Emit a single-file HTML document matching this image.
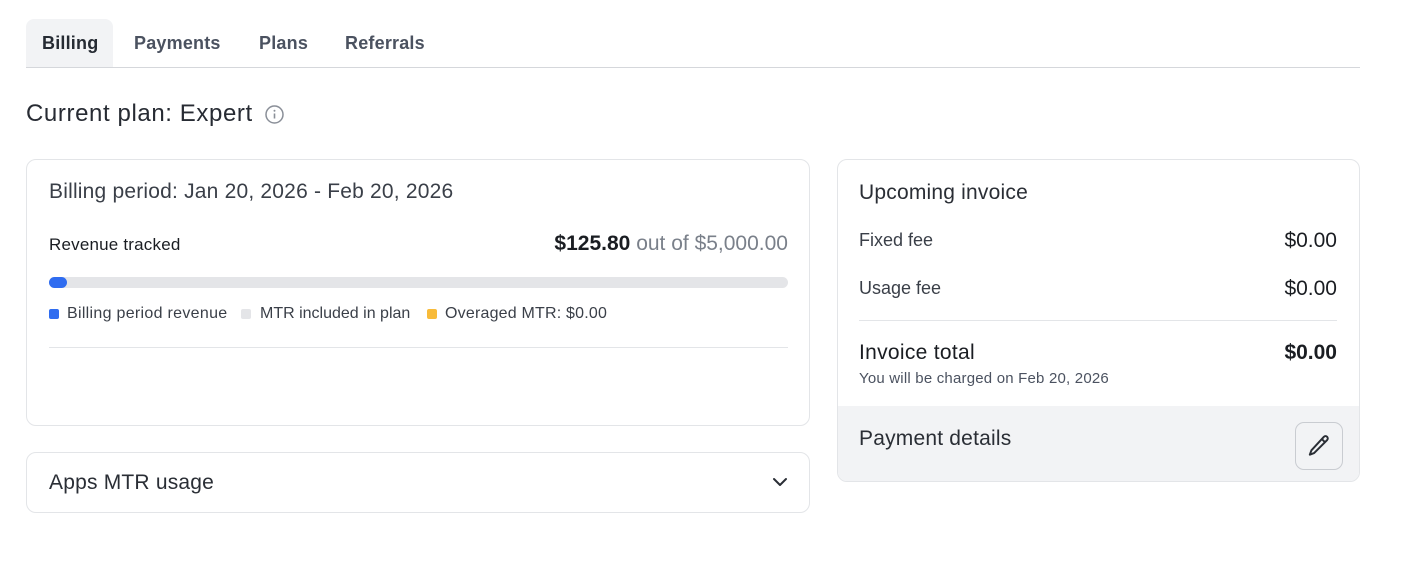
<!DOCTYPE html>
<html><head><style>
*{box-sizing:border-box;margin:0;padding:0}
body{width:1406px;height:568px;background:#fff;font-family:"Liberation Sans",sans-serif;color:#1f2329;position:relative;overflow:hidden}
.abs{position:absolute}
.tab{position:absolute;top:20px;height:47px;line-height:47px;font-size:18px;font-weight:bold;color:#4b5260;padding:0 16px;letter-spacing:0.2px}
.card{position:absolute;border:1px solid #e3e5e8;border-radius:10px;background:#fff}
.t{position:absolute;white-space:nowrap}
</style></head><body>
<div class="tab" style="left:26px;width:87px;background:#f2f3f5;border-radius:8px 8px 0 0;color:#262b33;top:19px;height:48px;line-height:49px">Billing</div>
<div class="tab" style="left:118px">Payments</div>
<div class="tab" style="left:243px">Plans</div>
<div class="tab" style="left:329px">Referrals</div>
<div class="abs" style="left:26px;top:67px;width:1334px;height:1px;background:#d5d7db"></div>
<div class="t" style="left:26px;top:100px;font-size:24px;color:#272b33;letter-spacing:0.6px">Current plan: Expert</div>
<svg class="abs" style="left:264px;top:104px" width="21" height="21" viewBox="0 0 21 21"><circle cx="10.5" cy="10.5" r="8.5" fill="none" stroke="#8a8f98" stroke-width="1.5"/><line x1="10.5" y1="9.5" x2="10.5" y2="14.5" stroke="#8a8f98" stroke-width="1.6"/><circle cx="10.5" cy="6.8" r="1" fill="#8a8f98"/></svg>

<div class="card" style="left:26px;top:159px;width:784px;height:267px"></div>
<div class="t" style="left:49px;top:180px;font-size:21px;color:#3a3f48;letter-spacing:0.2px">Billing period: Jan 20, 2026 - Feb 20, 2026</div>
<div class="t" style="left:49px;top:235px;font-size:17px;color:#1a1d22;letter-spacing:0.2px">Revenue tracked</div>
<div class="t" style="right:618px;top:232px;font-size:21px;color:#1a1d22"><b>$125.80</b> <span style="color:#7a808a">out of $5,000.00</span></div>
<div class="abs" style="left:49px;top:277px;width:739px;height:11px;background:#e4e5e8;border-radius:6px"></div>
<div class="abs" style="left:49px;top:277px;width:18px;height:11px;background:#2f6cf0;border-radius:6px"></div>
<div class="abs" style="left:49px;top:309px;width:10px;height:10px;background:#2f6cf0;border-radius:2px"></div>
<div class="t" style="left:67px;top:305px;font-size:16px;color:#3a3f48;letter-spacing:0.3px">Billing period revenue</div>
<div class="abs" style="left:241px;top:309px;width:10px;height:10px;background:#e4e5e8;border-radius:2px"></div>
<div class="t" style="left:260px;top:305px;font-size:16px;color:#3a3f48">MTR included in plan</div>
<div class="abs" style="left:427px;top:309px;width:10px;height:10px;background:#f8bb3a;border-radius:2px"></div>
<div class="t" style="left:445px;top:305px;font-size:16px;color:#3a3f48;letter-spacing:0.2px">Overaged MTR: $0.00</div>
<div class="abs" style="left:49px;top:347px;width:739px;height:1px;background:#e3e5e8"></div>

<div class="card" style="left:26px;top:452px;width:784px;height:61px"></div>
<div class="t" style="left:49px;top:471px;font-size:21px;color:#2a2e35;letter-spacing:0.2px">Apps MTR usage</div>
<svg class="abs" style="left:771px;top:475px" width="18" height="14" viewBox="0 0 18 14"><path d="M3 4l6 6 6-6" fill="none" stroke="#2a2e35" stroke-width="2" stroke-linecap="round" stroke-linejoin="round"/></svg>

<div class="card" style="left:837px;top:159px;width:523px;height:323px;overflow:hidden">
<div class="abs" style="left:0;top:246px;width:523px;height:77px;background:#f2f3f5"></div>
</div>
<div class="t" style="left:859px;top:181px;font-size:21px;color:#2a2e35;letter-spacing:0.2px">Upcoming invoice</div>
<div class="t" style="left:859px;top:230px;font-size:18px;color:#3a3f48">Fixed fee</div>
<div class="t" style="right:69px;top:229px;font-size:21px;color:#1a1d22">$0.00</div>
<div class="t" style="left:859px;top:278px;font-size:18px;color:#3a3f48">Usage fee</div>
<div class="t" style="right:69px;top:277px;font-size:21px;color:#1a1d22">$0.00</div>
<div class="abs" style="left:859px;top:320px;width:478px;height:1px;background:#e3e5e8"></div>
<div class="t" style="left:859px;top:341px;font-size:21px;color:#1a1d22;letter-spacing:0.3px">Invoice total</div>
<div class="t" style="right:69px;top:341px;font-size:21px;color:#1a1d22;font-weight:bold">$0.00</div>
<div class="t" style="left:859px;top:370px;font-size:15px;color:#4b5260;letter-spacing:0.2px">You will be charged on Feb 20, 2026</div>
<div class="t" style="left:859px;top:427px;font-size:21px;color:#2a2e35;letter-spacing:0.2px">Payment details</div>
<div class="abs" style="left:1295px;top:422px;width:48px;height:48px;border:1px solid #c9ccd1;border-radius:9px;background:#f2f3f5"></div>
<svg class="abs" style="left:1306px;top:433px" width="26" height="26" viewBox="0 0 24 24"><path d="M16.5 3.5a2.1 2.1 0 0 1 3 3L7.5 18.5 3.5 20l1.5-4z" fill="none" stroke="#2a2e35" stroke-width="1.8" stroke-linejoin="round"/><path d="M14.5 5.5l3 3" stroke="#2a2e35" stroke-width="1.8"/></svg>
</body></html>
